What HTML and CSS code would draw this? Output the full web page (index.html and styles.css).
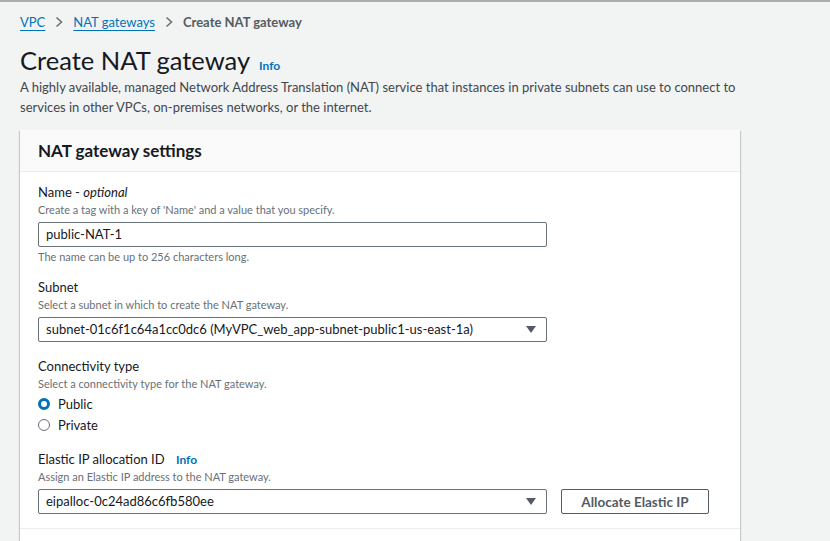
FILE: index.html
```html
<!DOCTYPE html>
<html>
<head>
<meta charset="utf-8">
<link rel="stylesheet" href="styles.css">
</head>
<body>
<div class="page">
  <nav class="crumbs">
    <a class="crumb-link" href="#">VPC</a>
    <svg class="chev" width="10" height="12" viewBox="0 0 10 12"><path d="M2.5 1.5 L7.5 6 L2.5 10.5" fill="none" stroke="#687078" stroke-width="1.6"/></svg>
    <a class="crumb-link" href="#">NAT gateways</a>
    <svg class="chev" width="10" height="12" viewBox="0 0 10 12"><path d="M2.5 1.5 L7.5 6 L2.5 10.5" fill="none" stroke="#687078" stroke-width="1.6"/></svg>
    <span class="crumb-current">Create NAT gateway</span>
  </nav>
  <h1 class="title">Create NAT gateway <a class="info" href="#">Info</a></h1>
  <p class="lead">A highly available, managed Network Address Translation (NAT) service that instances in private subnets can use to connect to services in other VPCs, on-premises networks, or the internet.</p>

  <section class="card">
    <div class="card-head">NAT gateway settings</div>
    <div class="card-body">
      <div class="field f-name">
        <div class="label">Name - <i>optional</i></div>
        <div class="desc">Create a tag with a key of 'Name' and a value that you specify.</div>
        <div class="input">public-NAT-1</div>
        <div class="desc hint">The name can be up to 256 characters long.</div>
      </div>
      <div class="field f-subnet">
        <div class="label">Subnet</div>
        <div class="desc">Select a subnet in which to create the NAT gateway.</div>
        <div class="input select"><span>subnet-01c6f1c64a1cc0dc6 (MyVPC_web_app-subnet-public1-us-east-1a)</span><span class="caret"></span></div>
      </div>
      <div class="field f-conn">
        <div class="label">Connectivity type</div>
        <div class="desc">Select a connectivity type for the NAT gateway.</div>
        <div class="radios">
          <div class="radio"><span class="dot on"></span>Public</div>
          <div class="radio"><span class="dot"></span>Private</div>
        </div>
      </div>
      <div class="field f-eip">
        <div class="label">Elastic IP allocation ID <a class="info info-field" href="#">Info</a></div>
        <div class="desc">Assign an Elastic IP address to the NAT gateway.</div>
        <div class="row">
          <div class="input select"><span>eipalloc-0c24ad86c6fb580ee</span><span class="caret"></span></div>
          <button class="btn">Allocate Elastic IP</button>
        </div>
      </div>
    </div>
    <div class="card-foot"></div>
  </section>
</div>
</body>
</html>
```

FILE: styles.css
```css
html, body {
  margin: 0;
  padding: 0;
}
body {
  background: #f2f3f3;
  border-top: 2px solid #a9adb0;
  font-family: Lato, "Liberation Sans", sans-serif;
  color: #16191f;
  height: 539px;
  overflow: hidden;
}
.page {
  padding: 0 90px 0 20px;
  display: flex;
  flex-direction: column;
}
.crumbs {
  display: flex;
  align-items: center;
  height: 20px;
  margin-top: 10px;
  font-size: 13px;
}
.crumb-link {
  color: #0073bb;
  text-decoration: underline;
  text-underline-offset: 3px;
}
.chev {
  margin: 0 9px;
}
.crumb-current {
  font-weight: bold;
  color: #545b64;
}
.title {
  margin: 11px 0 0;
  font-size: 25.5px;
  font-weight: normal;
  line-height: 34px;
  height: 34px;
}
.info {
  color: #0073bb;
  font-size: 12px;
  line-height: 1;
  font-weight: bold;
  text-decoration: none;
  margin-left: 3px;
}
.lead {
  margin: 0;
  font-size: 13px;
  line-height: 20px;
  color: #414750;
}
.card {
  margin-top: 13px;
  background: #fff;
  box-shadow: 0 1px 1px 0 rgba(0,28,36,.3), 1px 1px 1px 0 rgba(0,28,36,.15), -1px 1px 1px 0 rgba(0,28,36,.15);
}
.card-head {
  background: #fafafa;
  border-bottom: 1px solid #eaeded;
  height: 41px;
  line-height: 41px;
  padding: 0 18px;
  font-size: 17px;
  font-weight: bold;
}
.card-body {
  padding: 10px 18px 14px;
  display: flex;
  flex-direction: column;
}
.card-foot {
  border-top: 1px solid #eaeded;
  height: 20px;
}
.field {
  display: flex;
  flex-direction: column;
}
.f-subnet { margin-top: 12px; }
.f-conn { margin-top: 14px; }
.f-eip { margin-top: 14px; }
.label {
  font-size: 13px;
  line-height: 20px;
  height: 20px;
}
.desc {
  font-size: 11px;
  line-height: 16px;
  height: 16px;
  color: #687078;
}
.hint {
  margin-top: 2px;
}
.input {
  margin-top: 4px;
  width: 509px;
  height: 25px;
  box-sizing: border-box;
  border: 1px solid #687078;
  border-radius: 2px;
  padding: 0 8px 0 7px;
  font-size: 13px;
  line-height: 23px;
  display: flex;
  align-items: center;
  justify-content: space-between;
  white-space: nowrap;
}
.caret {
  width: 0;
  height: 0;
  border-left: 5px solid transparent;
  border-right: 5px solid transparent;
  border-top: 7px solid #545b64;
  margin-right: 2px;
}
.radios {
  margin-top: 1px;
  display: flex;
  flex-direction: column;
}
.radio {
  display: flex;
  align-items: center;
  height: 21px;
  font-size: 13px;
}
.dot {
  width: 12px;
  height: 12px;
  box-sizing: border-box;
  border-radius: 50%;
  border: 1.5px solid #687078;
  margin-right: 8px;
}
.dot.on {
  border: 3.5px solid #0073bb;
  background: #fff;
}
.info-field {
  margin-left: 8px;
}
.row {
  display: flex;
  align-items: flex-start;
  gap: 14px;
}
.btn {
  margin-top: 4px;
  width: 148px;
  height: 25px;
  background: #fff;
  border: 1px solid #545b64;
  border-radius: 2px;
  font-family: inherit;
  font-size: 13.5px;
  font-weight: bold;
  color: #545b64;
  padding: 0;
}
```
